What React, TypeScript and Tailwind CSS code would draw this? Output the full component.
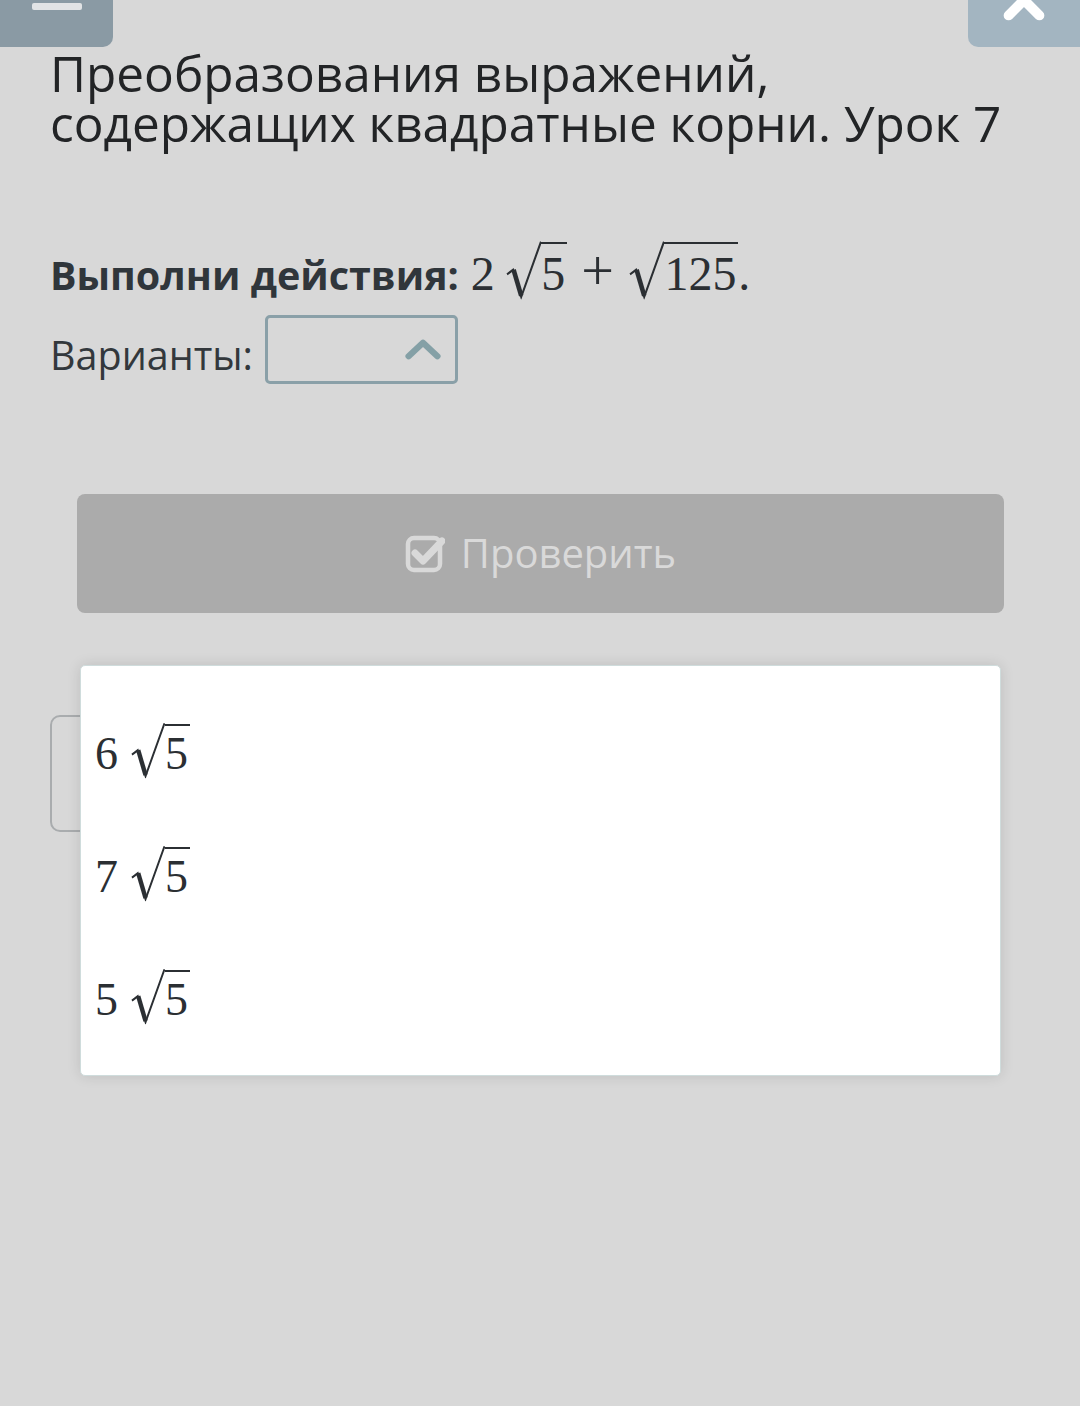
const sans = { fontFamily: '"Open Sans", "Noto Sans", sans-serif' };
const serif = { fontFamily: '"Liberation Serif", "DejaVu Serif", serif' };

function Sqrt({ children }: { children: React.ReactNode }) {
  return (
    <span className="inline-flex items-baseline">
      <svg viewBox="0 0 36 52" className="h-[1.22em] w-[0.76em] shrink-0 translate-y-[0.2em]" preserveAspectRatio="none">
        <path d="M2 30 L8 26 L16 50 L35.5 1" fill="none" stroke="currentColor" strokeWidth="2" strokeLinejoin="miter" />
        <path d="M8.5 26 L16 49" fill="none" stroke="currentColor" strokeWidth="4.5" />
      </svg>
      <span className="border-t-[2px] border-current leading-[1em] pt-[0.12em] pr-[0.04em]">{children}</span>
    </span>
  );
}

function Option({ n }: { n: string }) {
  return (
    <div className="h-[123px] flex items-center pl-[14px] text-[46px] text-[#2b2f33]" style={serif}>
      <span className="flex items-baseline">
        <span className="mr-[12px]">{n}</span>
        <Sqrt>5</Sqrt>
      </span>
    </div>
  );
}

export default function App() {
  return (
    <div className="relative min-h-[1406px] w-[1080px] bg-[#d8d8d8] overflow-hidden" style={sans}>
      <div className="flex justify-between h-[47px]">
        <div className="relative w-[113px] h-[47px] bg-[#8a9aa4] rounded-br-[10px]">
          <div className="absolute left-[32px] top-[3px] w-[50px] h-[7px] rounded-[2px] bg-[#e1e3e5]" />
        </div>
        <div className="relative w-[112px] h-[47px] bg-[#a3b5c1] rounded-bl-[10px] overflow-hidden">
          <svg viewBox="0 0 40 40" className="absolute left-[34px] top-[-22px] w-[44px] h-[44px]">
            <path d="M6 6 L34 34 M34 6 L6 34" stroke="#ffffff" strokeWidth="9" strokeLinecap="round" />
          </svg>
        </div>
      </div>

      <div className="px-[50px]">
        <h1 className="text-[49.5px] leading-[50px] text-[#222426] font-normal pt-[1px]">
          Преобразования выражений,<br />содержащих квадратные корни. Урок 7
        </h1>

        <div className="mt-[83px] flex items-baseline text-[39.5px] leading-[50px] text-[#30363b]">
          <span className="font-bold">Выполни действия:</span>
          <span className="ml-[12px] text-[48px] text-[#2b2f33] flex items-baseline" style={serif}>
            <span className="mr-[10px]">2</span>
            <Sqrt>5</Sqrt>
            <span className="mx-[14px] text-[58px]">+</span>
            <Sqrt>125</Sqrt>
            <span>.</span>
          </span>
        </div>

        <div className="mt-[15px] flex items-start">
          <span className="mt-[20px] text-[39.5px] leading-[40px] text-[#33383c]">Варианты:</span>
          <div className="ml-[12px] w-[193px] h-[69px] border-[3px] border-[#8aa0a8] rounded-[5px] flex items-center justify-end pr-[14px]">
            <svg viewBox="0 0 40 24" className="w-[36px] h-[22px]">
              <path d="M4 20 L20 5 L36 20" fill="none" stroke="#84a0a6" strokeWidth="7" strokeLinejoin="round" strokeLinecap="round" />
            </svg>
          </div>
        </div>

        <button className="mt-[110px] ml-[27px] w-[927px] h-[119px] rounded-[8px] bg-[#ababab] flex items-center justify-center gap-[16px] text-[40px] text-[#d9d9d9]">
          <svg viewBox="0 0 40 40" className="w-[40px] h-[40px]">
            <rect x="3" y="5" width="32" height="32" rx="6" fill="none" stroke="#d9d9d9" strokeWidth="4.5" />
            <path d="M10 20 L18 28 L37 8" fill="none" stroke="#d9d9d9" strokeWidth="7" strokeLinecap="round" strokeLinejoin="round" />
          </svg>
          <span>Проверить</span>
        </button>

        <div className="mt-[102px] w-[200px] h-[117px] border-[2px] border-[#a9acae] rounded-[10px]" />
      </div>

      <div className="absolute left-[80px] top-[665px] w-[921px] h-[411px] bg-white rounded-[5px] border border-[#cfdcdc] shadow-[0_0_14px_rgba(0,0,0,0.12)] pt-[23px]">
        <Option n="6" />
        <Option n="7" />
        <Option n="5" />
      </div>
    </div>
  );
}
